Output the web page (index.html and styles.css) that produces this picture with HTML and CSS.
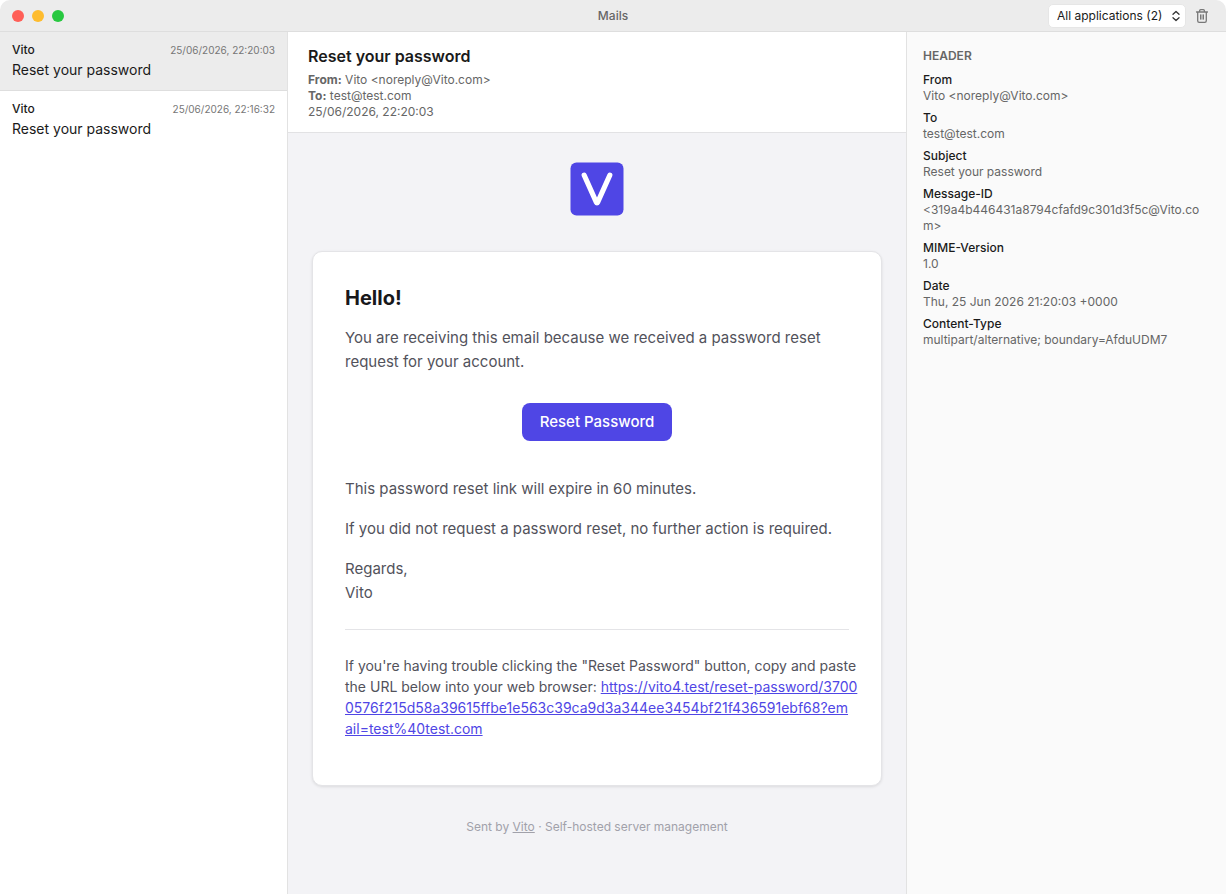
FILE: index.html
```html
<!DOCTYPE html>
<html lang="en">
<head>
    <meta charset="UTF-8">
    <meta name="viewport" content="width=device-width, initial-scale=1.0">
    <title>Mails</title>
    <link rel="stylesheet" href="styles.css">
</head>
<body>
    <div class="window">
        <header class="titlebar">
            <div class="lights">
                <span class="light red"></span>
                <span class="light yellow"></span>
                <span class="light green"></span>
            </div>
            <h1 class="window-title">Mails</h1>
            <div class="tools">
                <div class="picker">
                    <select class="picker-select" aria-label="Application">
                        <option>All applications (2)</option>
                    </select>
                    <svg class="picker-icon" width="10" height="12" viewBox="0 0 10 12" fill="none" stroke="#333" stroke-width="1.3" stroke-linecap="round" stroke-linejoin="round">
                        <path d="M2 4.3 5 1.5l3 2.8M2 7.7l3 2.8 3-2.8"/>
                    </svg>
                </div>
                <button class="trash" type="button" aria-label="Delete mails">
                    <svg width="14" height="16" viewBox="0 0 14 16" fill="none" stroke="#777" stroke-width="1.3" stroke-linecap="round" stroke-linejoin="round">
                        <path d="M1.5 4h11M4.6 4V2.8c0-.7.4-1.1 1.1-1.1h2.6c.7 0 1.1.4 1.1 1.1V4M2.7 4v8.7c0 .9.6 1.6 1.5 1.6h5.6c.9 0 1.5-.7 1.5-1.6V4"/>
                        <path stroke-width="1" d="M5.5 6.8v4.4M7 6.8v4.4M8.5 6.8v4.4"/>
                    </svg>
                </button>
            </div>
        </header>

        <div class="panes">
            <!-- mail list -->
            <nav class="mail-list">
                <article class="mail selected">
                    <div class="mail-top">
                        <span class="sender">Vito</span>
                        <time class="mail-date">25/06/2026, 22:20:03</time>
                    </div>
                    <p class="mail-subject">Reset your password</p>
                </article>
                <article class="mail">
                    <div class="mail-top">
                        <span class="sender">Vito</span>
                        <time class="mail-date">25/06/2026, 22:16:32</time>
                    </div>
                    <p class="mail-subject">Reset your password</p>
                </article>
            </nav>

            <!-- opened mail -->
            <main class="reader">
                <header class="reader-head">
                    <h2 class="reader-subject">Reset your password</h2>
                    <p><b>From:</b> Vito &lt;noreply@Vito.com&gt;</p>
                    <p><b>To:</b> test@test.com</p>
                    <p>25/06/2026, 22:20:03</p>
                </header>
                <div class="message">
                    <svg class="logo" width="54" height="54" viewBox="0 0 54 54">
                        <rect x=".5" y=".5" width="53" height="53" rx="6" fill="#4f46e5"/>
                        <path d="M14.2 13.2 26.2 40q.8 1.6 1.6 0L39.8 13.2" fill="none" stroke="#fff" stroke-width="5.2" stroke-linecap="round" stroke-linejoin="round"/>
                    </svg>
                    <section class="card">
                        <h3 class="greeting">Hello!</h3>
                        <p>You are receiving this email because we received a password reset request for your account.</p>
                        <a class="reset-button" href="#">Reset Password</a>
                        <p>This password reset link will expire in 60 minutes.</p>
                        <p>If you did not request a password reset, no further action is required.</p>
                        <p>Regards,<br>Vito</p>
                        <div class="subcopy">
                            <p class="subcopy-text">If you're having trouble clicking the "Reset Password" button, copy and paste<br>the URL below into your web browser: <a class="reset-link" href="#">https://vito4.test/reset-password/3700<br>0576f215d58a39615ffbe1e563c39ca9d3a344ee3454bf21f436591ebf68?em<br>ail=test%40test.com</a></p>
                        </div>
                    </section>
                    <footer class="sent-by">Sent by <a href="#">Vito</a> · Self-hosted server management</footer>
                </div>
            </main>

            <!-- raw headers -->
            <aside class="details">
                <h2 class="details-title">HEADER</h2>
                <dl class="headers">
                    <dt>From</dt>
                    <dd>Vito &lt;noreply@Vito.com&gt;</dd>
                    <dt>To</dt>
                    <dd>test@test.com</dd>
                    <dt>Subject</dt>
                    <dd>Reset your password</dd>
                    <dt>Message-ID</dt>
                    <dd>&lt;319a4b446431a8794cfafd9c301d3f5c@Vito.com&gt;</dd>
                    <dt>MIME-Version</dt>
                    <dd>1.0</dd>
                    <dt>Date</dt>
                    <dd>Thu, 25 Jun 2026 21:20:03 +0000</dd>
                    <dt>Content-Type</dt>
                    <dd>multipart/alternative; boundary=AfduUDM7</dd>
                </dl>
            </aside>
        </div>
    </div>
</body>
</html>
```

FILE: styles.css
```css
* {
    padding: 0;
    margin: 0;
    box-sizing: border-box;
}
body {
    background-color: white;
    color: #1a1a1a;
    font-family: Inter, "Liberation Sans", sans-serif;
    font-size: 12px;
    line-height: 16px;
}
.window {
    display: flex;
    flex-direction: column;
    min-height: 100vh;
    border-radius: 10px 10px 0 0;
    overflow: hidden;
}

/* title bar */
.titlebar {
    display: grid;
    grid-template-columns: 1fr auto 1fr;
    align-items: center;
    height: 32px;
    padding: 0 12px;
    background-color: #ececec;
    border-bottom: 1px solid #dedede;
}
.lights {
    display: flex;
    gap: 8px;
}
.light {
    width: 12px;
    height: 12px;
    border-radius: 50%;
}
.red {
    background-color: #ff5f57;
}
.yellow {
    background-color: #febc2e;
}
.green {
    background-color: #28c840;
}
.window-title {
    font-size: 12px;
    font-weight: 500;
    color: #666;
}
.tools {
    display: flex;
    justify-content: flex-end;
    align-items: center;
    gap: 8px;
    padding-right: 4px;
}
.picker {
    display: grid;
    align-items: center;
}
.picker-select,
.picker-icon {
    grid-area: 1 / 1;
}
.picker-select {
    appearance: none;
    height: 24px;
    padding: 0 22px 0 8px;
    border: 1px solid #e6e6e6;
    border-radius: 5px;
    background-color: white;
    color: #1a1a1a;
    font: inherit;
}
.picker-icon {
    justify-self: end;
    margin-right: 5px;
    pointer-events: none;
}
.trash {
    display: flex;
    padding: 0 1px;
    border: none;
    background: none;
}

.panes {
    flex: 1;
    display: grid;
    grid-template-columns: 288px 1fr 320px;
}

/* mail list */
.mail-list {
    border-right: 1px solid #e2e2e2;
}
.mail {
    padding: 10px 12px;
}
.selected {
    background-color: #ececec;
    border-bottom: 1px solid #dedede;
}
.mail-top {
    display: flex;
    justify-content: space-between;
    align-items: center;
    margin-bottom: 2px;
}
.sender {
    font-weight: 500;
}
.mail-date {
    font-size: 10px;
    color: #777;
}
.mail-subject {
    font-size: 14px;
    line-height: 20px;
}

/* reader */
.reader {
    display: flex;
    flex-direction: column;
    min-width: 0;
}
.reader-head {
    padding: 12px 20px;
    border-bottom: 1px solid #e2e2e4;
    color: #666;
}
.reader-subject {
    margin-bottom: 4px;
    font-size: 16px;
    line-height: 24px;
    font-weight: 600;
    color: #1a1a1a;
}
.message {
    flex: 1;
    display: flex;
    flex-direction: column;
    align-items: center;
    padding: 29px 24px;
    background-color: #f3f3f6;
}
.card {
    display: flex;
    flex-direction: column;
    gap: 16px;
    width: 100%;
    max-width: 570px;
    margin-top: 35px;
    padding: 32px;
    border: 1px solid #e4e4e7;
    border-radius: 10px;
    background-color: white;
    box-shadow: 0 1px 3px rgba(0, 0, 0, 0.1);
    color: #52525b;
    font-size: 15px;
    line-height: 24px;
}
.greeting {
    margin-bottom: -2px;
    font-size: 20px;
    line-height: 28px;
    font-weight: 700;
    color: #18181b;
}
.reset-button {
    align-self: center;
    margin: 13px 0 20px;
    padding: 7px 18px;
    border-radius: 8px;
    background-color: #4f46e5;
    color: white;
    font-weight: 500;
    text-decoration: none;
}
.subcopy {
    margin-top: 8px;
    padding: 25px 0 14px;
    border-top: 1px solid #e4e4e7;
    font-size: 14px;
    line-height: 21px;
}
/* lets the long url run a little past the rule */
.subcopy-text {
    margin-right: -16px;
}
.reset-link {
    color: #4f46e5;
}
.sent-by {
    padding-top: 33px;
    color: #a1a1aa;
}
.sent-by a {
    color: inherit;
}

/* raw headers */
.details {
    padding: 16px 20px 16px 16px;
    border-left: 1px solid #e2e2e2;
    background-color: #fafafa;
}
.details-title {
    margin-bottom: 8px;
    font-size: 12px;
    font-weight: 600;
    color: #666;
}
.headers dt {
    font-weight: 500;
}
.headers dd {
    margin-bottom: 6px;
    color: #666;
    word-break: break-all;
}
```
